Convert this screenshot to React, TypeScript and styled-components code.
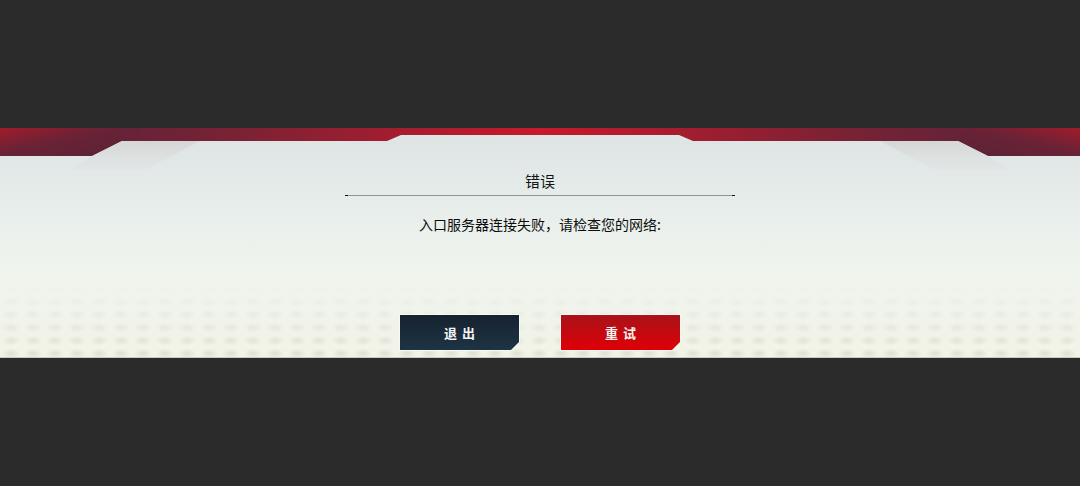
import React from 'react';
import styled, { createGlobalStyle } from 'styled-components';

const GlobalStyle = createGlobalStyle`
  html, body {
    margin: 0;
    padding: 0;
    background: #2b2b2b;
    font-family: "Noto Sans CJK SC", "Noto Sans", sans-serif;
  }
`;

const Screen = styled.div`
  width: 1080px;
  height: 486px;
  padding-top: 128px;
  box-sizing: border-box;
`;

const Panel = styled.section`
  position: relative;
  height: 230px;
  box-sizing: border-box;
  overflow: hidden;
  border-bottom: 1px solid #c9cac2;
  background: linear-gradient(180deg, #dde3e3 0%, #e6ecea 30%, #eff4ee 60%, #f2f3e8 100%);
  display: flex;
  flex-direction: column;
  align-items: center;
  padding-top: 41px;

  &::after {
    content: '';
    position: absolute;
    left: 0;
    right: 0;
    bottom: 0;
    height: 75px;
    background-image: radial-gradient(ellipse 9px 5px at center, rgba(150, 150, 120, 0.22) 0%, rgba(150, 150, 120, 0) 100%);
    background-size: 22px 13px;
    -webkit-mask-image: linear-gradient(180deg, transparent 0%, rgba(0, 0, 0, 0.5) 55%, #000 100%);
    mask-image: linear-gradient(180deg, transparent 0%, rgba(0, 0, 0, 0.5) 55%, #000 100%);
    pointer-events: none;
  }
`;

const Header = styled.svg`
  position: absolute;
  top: 0;
  left: 0;
  pointer-events: none;
`;

const Title = styled.h2`
  margin: 0;
  font-size: 15px;
  font-weight: 400;
  line-height: 24px;
  color: #141414;
`;

const Divider = styled.div`
  position: relative;
  width: 390px;
  height: 1px;
  margin-top: 2px;
  background: #8f9494;

  &::before,
  &::after {
    content: '';
    position: absolute;
    top: 0;
    width: 3px;
    height: 1px;
    background: #111;
  }
  &::before { left: 0; }
  &::after { right: 0; }
`;

const Message = styled.p`
  margin: 18px 0 0;
  font-size: 14px;
  line-height: 20px;
  color: #0c0c0c;
`;

const Actions = styled.div`
  display: flex;
  gap: 40px;
  margin-top: 80px;
  position: relative;
  z-index: 1;
`;

const ButtonFrame = styled.button`
  width: 121px;
  height: 37px;
  padding: 1px;
  border: 0;
  background: #f8f9f6;
  clip-path: polygon(0 0, 100% 0, 100% calc(100% - 9px), calc(100% - 9px) 100%, 0 100%);
  cursor: pointer;
`;

const ButtonFace = styled.span<{ $variant: 'dark' | 'red' }>`
  display: flex;
  align-items: center;
  justify-content: center;
  width: 100%;
  height: 100%;
  clip-path: polygon(0 0, 100% 0, 100% calc(100% - 8px), calc(100% - 8px) 100%, 0 100%);
  background: ${({ $variant }) =>
    $variant === 'dark'
      ? 'linear-gradient(180deg, #17222f 0%, #1d3444 100%)'
      : 'linear-gradient(180deg, #a8121a 0%, #e00006 100%)'};
  color: #f4f4f4;
  font-family: "Noto Sans CJK SC", sans-serif;
  font-size: 13px;
  font-weight: 700;
  letter-spacing: 5px;
  text-indent: 5px;
`;

const HeaderDecor: React.FC = () => (
  <Header width="1080" height="45" viewBox="0 0 1080 45">
    <defs>
      <linearGradient id="band" x1="0" y1="0" x2="1" y2="0">
        <stop offset="0" stopColor="#a81b2a" />
        <stop offset="0.09" stopColor="#62233a" />
        <stop offset="0.22" stopColor="#7a2234" />
        <stop offset="0.5" stopColor="#c8192b" />
        <stop offset="0.78" stopColor="#7a2234" />
        <stop offset="0.91" stopColor="#62233a" />
        <stop offset="1" stopColor="#a81b2a" />
      </linearGradient>
      <linearGradient id="wingL" x1="0" y1="0" x2="1" y2="1">
        <stop offset="0" stopColor="#a01c2b" />
        <stop offset="0.45" stopColor="#6a2236" />
        <stop offset="1" stopColor="#5a2336" />
      </linearGradient>
      <linearGradient id="wingR" x1="1" y1="0" x2="0" y2="1">
        <stop offset="0" stopColor="#a01c2b" />
        <stop offset="0.45" stopColor="#6a2236" />
        <stop offset="1" stopColor="#5a2336" />
      </linearGradient>
      <linearGradient id="shade" x1="0" y1="0" x2="0" y2="1">
        <stop offset="0" stopColor="#d6d6d6" />
        <stop offset="1" stopColor="#dcdfdf" stopOpacity="0.2" />
      </linearGradient>
    </defs>
    <rect x="0" y="0" width="1080" height="13" fill="url(#band)" />
    <polygon points="0,0 122,0 122,13 92,28 0,28" fill="url(#wingL)" />
    <polygon points="1080,0 958,0 958,13 988,28 1080,28" fill="url(#wingR)" />
    <polygon points="122,13 200,13 145,42 70,42 92,28" fill="url(#shade)" />
    <polygon points="958,13 880,13 935,42 1010,42 988,28" fill="url(#shade)" />
    <polygon points="387,13 401,7 679,7 693,13" fill="#dfe4e4" />
  </Header>
);

const App: React.FC = () => (
  <>
    <GlobalStyle />
    <Screen>
      <Panel>
        <HeaderDecor />
        <Title>错误</Title>
        <Divider />
        <Message>入口服务器连接失败，请检查您的网络:</Message>
        <Actions>
          <ButtonFrame>
            <ButtonFace $variant="dark">退出</ButtonFace>
          </ButtonFrame>
          <ButtonFrame>
            <ButtonFace $variant="red">重试</ButtonFace>
          </ButtonFrame>
        </Actions>
      </Panel>
    </Screen>
  </>
);

export default App;
